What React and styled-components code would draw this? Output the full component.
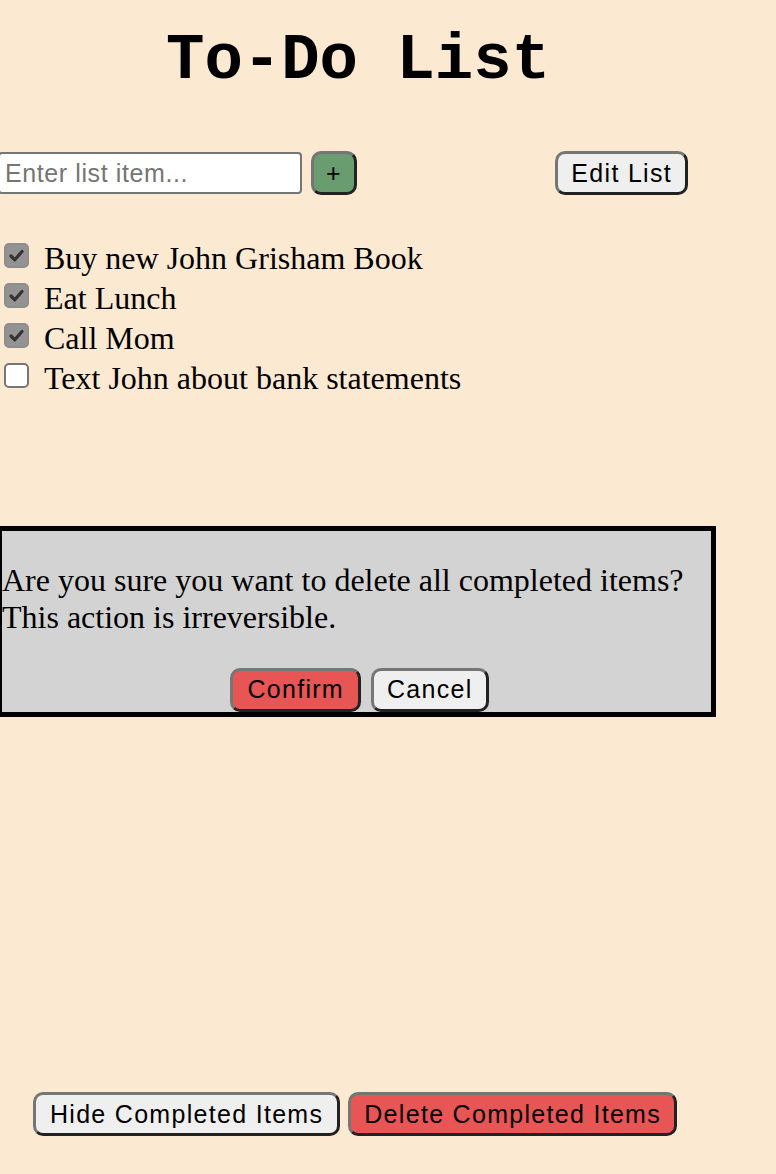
import React from 'react';
import styled, { createGlobalStyle } from 'styled-components';

const GlobalStyle = createGlobalStyle`
  html, body {
    margin: 0;
    padding: 0;
    background: #fce9d1;
  }
  body {
    font-family: "Liberation Serif", "Times New Roman", serif;
    color: #000;
    overflow: hidden;
  }
`

const Page = styled.div`
  width: 716px;
  min-height: 100vh;
  display: flex;
  flex-direction: column;
`

const Title = styled.h1`
  margin: 0;
  padding-top: 25px;
  text-align: center;
  font-family: "Liberation Mono", "Courier New", monospace;
  font-weight: bold;
  font-size: 64px;
  line-height: normal;
`

const Toolbar = styled.div`
  margin-top: 54px;
  display: flex;
  align-items: center;
  justify-content: space-between;
  padding-right: 28px;
`

const AddGroup = styled.div`
  display: flex;
  align-items: center;
  gap: 9px;
`

const ItemInput = styled.input`
  margin-left: -2px;
  width: 304px;
  height: 42px;
  box-sizing: border-box;
  border: 2px solid #767676;
  border-radius: 4px;
  padding: 0 5px;
  background: #fff;
  font-family: "Liberation Sans", Arial, sans-serif;
  font-size: 25px;
  letter-spacing: 0.6px;
  outline: none;
  &::placeholder {
    color: #757575;
  }
`

const Button = styled.button`
  height: 44px;
  box-sizing: border-box;
  padding: 0 ${props => props.pad || 13}px;
  border: 3px solid;
  border-color: #767676 #222 #222 #767676;
  border-radius: 10px;
  background: ${props => props.bg || '#efefef'};
  color: #000;
  font-family: "Liberation Sans", Arial, sans-serif;
  font-size: 25px;
  letter-spacing: 1.3px;
  line-height: 1;
  white-space: nowrap;
  cursor: pointer;
`

const List = styled.div`
  margin-top: 43px;
  padding-left: 4px;
  display: flex;
  flex-direction: column;
`

const Row = styled.label`
  height: 40px;
  display: flex;
  align-items: flex-start;
  gap: 15px;
  font-size: 32px;
  line-height: 40px;
`

const Box = styled.span`
  margin-top: 5px;
  width: 25px;
  height: 25px;
  box-sizing: border-box;
  border-radius: 5px;
  flex-shrink: 0;
  display: flex;
  align-items: center;
  justify-content: center;
  background: ${props => props.checked ? '#939393' : '#fff'};
  border: 2px solid ${props => props.checked ? '#8e8e8e' : '#767676'};
`

const Modal = styled.div`
  margin-top: 128px;
  margin-left: -3px;
  border: 5px solid #000;
  background: #d3d3d3;
`

const Message = styled.p`
  margin: 31px 0 32px;
  font-size: 32px;
  line-height: 1.15;
`

const ButtonRow = styled.div`
  display: flex;
  justify-content: center;
  gap: ${props => props.gap || 10}px;
  padding-left: ${props => props.shift || 0}px;
`

const Footer = styled.div`
  margin-top: auto;
  padding-bottom: 38px;
  padding-right: 6px;
  display: flex;
  justify-content: center;
  gap: 8px;
`

const Check = () => (
  <svg width="19" height="19" viewBox="0 0 19 19">
    <polyline points="4,10 7.8,13.8 15,5.5" fill="none" stroke="#333" strokeWidth="3.2" strokeLinecap="round" strokeLinejoin="round"/>
  </svg>
)

const items = [
  { text: 'Buy new John Grisham Book', done: true },
  { text: 'Eat Lunch', done: true },
  { text: 'Call Mom', done: true },
  { text: 'Text John about bank statements', done: false },
]

export default function App() {
  return (
    <Page>
      <GlobalStyle/>
      <Title>To-Do List</Title>
      <Toolbar>
        <AddGroup>
          <ItemInput placeholder="Enter list item..."/>
          <Button bg="#699c6f" pad={12}>+</Button>
        </AddGroup>
        <Button>Edit List</Button>
      </Toolbar>
      <List>
        {items.map(item => (
          <Row key={item.text}>
            <Box checked={item.done}>{item.done && <Check/>}</Box>
            {item.text}
          </Row>
        ))}
      </List>
      <Modal>
        <Message>
          Are you sure you want to delete all completed items?<br/>
          This action is irreversible.
        </Message>
        <ButtonRow shift={6}>
          <Button bg="#e85555" pad={14}>Confirm</Button>
          <Button>Cancel</Button>
        </ButtonRow>
      </Modal>
      <Footer>
        <Button pad={14}>Hide Completed Items</Button>
        <Button bg="#e85555">Delete Completed Items</Button>
      </Footer>
    </Page>
  )
}
